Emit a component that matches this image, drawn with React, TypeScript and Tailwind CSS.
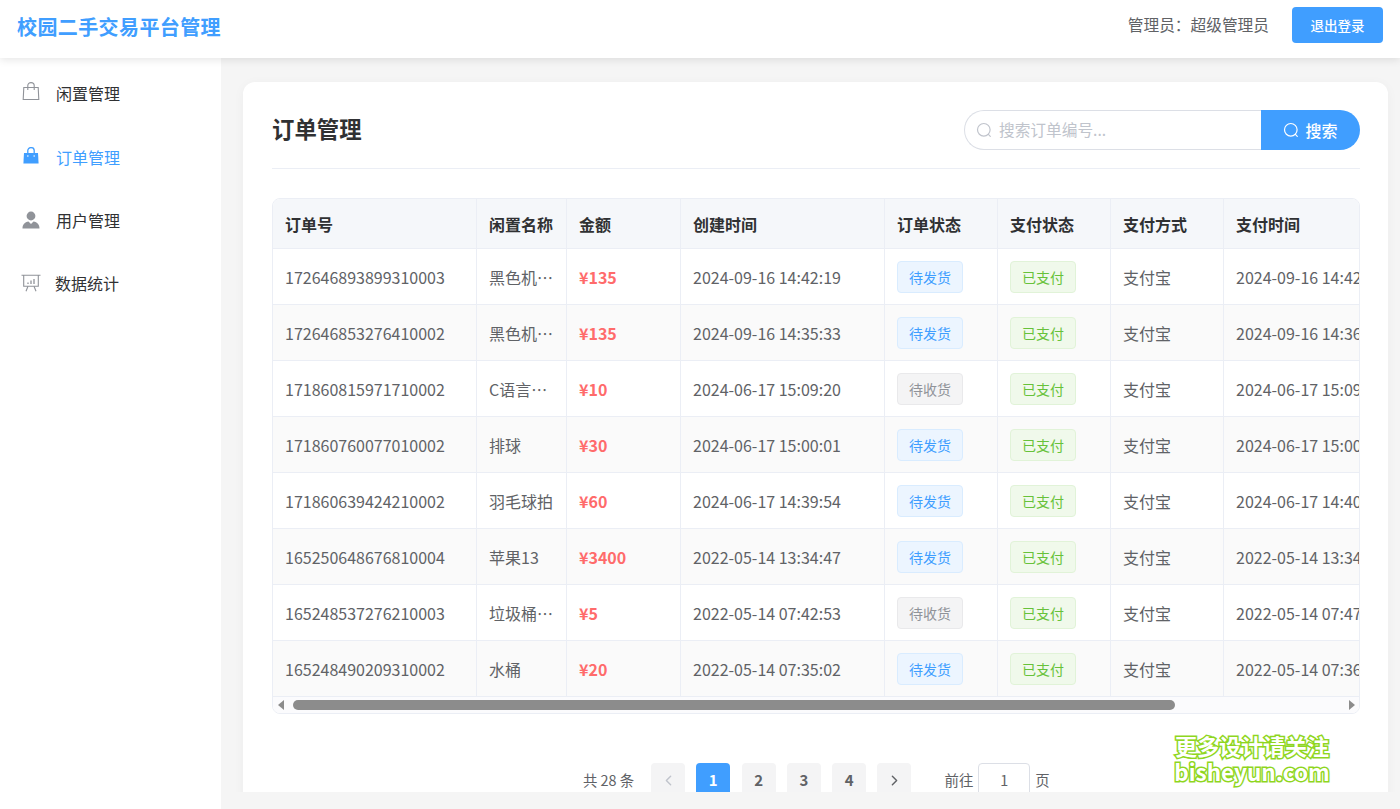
import { ChevronLeft, ChevronRight } from "lucide-react";

const font = "font-['Noto_Sans_CJK_SC','Noto_Sans',sans-serif]";

const GoodsIcon = () => (
  <svg width="18" height="18" viewBox="0 0 18 18" fill="none" stroke="#909399" strokeWidth="1.1">
    <path d="M1.800 5.500h14.400l.6 12H1.200z" />
    <path d="M5.800 8V3.600a3.200 3 0 0 1 6.400 0V8" />
  </svg>
);

const GoodsFilledIcon = () => (
  <svg width="18" height="18" viewBox="0 0 18 18" fill="none">
    <path d="M5.800 7V3.600a3.200 3 0 0 1 6.400 0V7" stroke="#409eff" strokeWidth="1.300" />
    <path d="M2 6h14l.6 10.600H1.400z" fill="#409eff" />
    <path d="M5.300 8.300h1.100v1.500H5.300zM11.600 8.300h1.100v1.500h-1.100z" fill="#fff" />
  </svg>
);

const UserIcon = () => (
  <svg width="18" height="18" viewBox="0 0 18 18" fill="#909399">
    <circle cx="9" cy="5" r="4.400" />
    <path d="M.5 17.500c0-4 2.200-6.500 6-7L9 13l2.500-2.500c3.800.5 6 3 6 7z" />
  </svg>
);

const BoardIcon = () => (
  <svg width="20" height="18" viewBox="0 0 20 18" fill="none" stroke="#909399" strokeWidth="1.100">
    <path d="M.5 1.200h19M2.700 1.200v11h14.600v-11" />
    <path d="M7 12.200l-2 5M13 12.200l2 5" />
    <path d="M7 10V8.500M10 10V6.500M13 10V5" strokeWidth="1.300" />
  </svg>
);

const SearchIcon = ({ color }: { color: string }) => (
  <svg width="16" height="16" viewBox="0 0 16 16" fill="none" stroke={color} strokeWidth="1.200" strokeLinecap="round">
    <circle cx="7.800" cy="7.800" r="6.300" />
    <path d="M12.400 12.400l1.900 1.900" />
  </svg>
);

const menus = [
  { name: "闲置管理", icon: <GoodsIcon />, offset: "mb-[5px]" },
  { name: "订单管理", icon: <GoodsFilledIcon />, offset: "mb-[1px]" },
  { name: "用户管理", icon: <UserIcon />, offset: "mb-[1px]" },
  { name: "数据统计", icon: <BoardIcon />, offset: "-ml-[1px]" },
];

const orders = [
  { no: "172646893899310003", name: "黑色机…", price: "¥135", created: "2024-09-16 14:42:19", status: "待发货", paid: "2024-09-16 14:42:25" },
  { no: "172646853276410002", name: "黑色机…", price: "¥135", created: "2024-09-16 14:35:33", status: "待发货", paid: "2024-09-16 14:36:02" },
  { no: "171860815971710002", name: "C语言…", price: "¥10", created: "2024-06-17 15:09:20", status: "待收货", paid: "2024-06-17 15:09:41" },
  { no: "171860760077010002", name: "排球", price: "¥30", created: "2024-06-17 15:00:01", status: "待发货", paid: "2024-06-17 15:00:30" },
  { no: "171860639424210002", name: "羽毛球拍", price: "¥60", created: "2024-06-17 14:39:54", status: "待发货", paid: "2024-06-17 14:40:12" },
  { no: "165250648676810004", name: "苹果13", price: "¥3400", created: "2022-05-14 13:34:47", status: "待发货", paid: "2022-05-14 13:34:58" },
  { no: "165248537276210003", name: "垃圾桶…", price: "¥5", created: "2022-05-14 07:42:53", status: "待收货", paid: "2022-05-14 07:47:10" },
  { no: "165248490209310002", name: "水桶", price: "¥20", created: "2022-05-14 07:35:02", status: "待发货", paid: "2022-05-14 07:36:20" },
];

const heads = ["订单号", "闲置名称", "金额", "创建时间", "订单状态", "支付状态", "支付方式", "支付时间"];
const widths = ["w-[204px]", "w-[90px]", "w-[114px]", "w-[204px]", "w-[113px]", "w-[113px]", "w-[113px]", "w-[204px]"];

const Tag = ({ text }: { text: string }) => {
  const color =
    text === "已支付"
      ? "bg-[#f0f9eb] border-[#e1f3d8] text-[#67c23a]"
      : text === "待发货"
        ? "bg-[#ecf5ff] border-[#d9ecff] text-[#409eff]"
        : "bg-[#f4f4f5] border-[#e9e9eb] text-[#909399]";
  return (
    <span className={`flex h-8 w-[66px] items-center justify-center rounded border text-sm ${color}`}>
      {text}
    </span>
  );
};

const cell = "h-14 border-r border-b border-[#ebeef5] px-3 whitespace-nowrap overflow-hidden";
const pageBtn = "flex h-[34px] w-[34px] items-center justify-center rounded-sm";

export default function App() {
  return (
    <div className={`relative flex h-[809px] w-[1400px] flex-col overflow-hidden bg-[#f5f5f5] ${font}`}>
      <header className="relative z-10 flex h-[58px] items-center justify-between bg-white px-[17px] pb-2 shadow-[0_2px_8px_rgba(0,0,0,0.1)]">
        <h1 className="mt-1 text-[20px] font-bold tracking-[0.4px] text-[#409eff]">校园二手交易平台管理</h1>
        <div className="flex items-center gap-[23px]">
          <span className="text-[15.700px] text-[#606266]">管理员：超级管理员</span>
          <button className="h-9 w-[91px] rounded bg-[#409eff] text-[13.500px] font-medium text-white">退出登录</button>
        </div>
      </header>

      <div className="flex min-h-0 flex-1">
        <aside className="w-[221px] bg-white pt-[3.700px]">
          {menus.map((m) => {
            const active = m.name === "订单管理";
            return (
              <div key={m.name} className="flex h-[63.330px] items-center pl-[22px]">
                <span className={`flex w-[34px] ${m.offset}`}>{m.icon}</span>
                <span className={`text-base ${active ? "text-[#409eff]" : "text-[#303133]"}`}>{m.name}</span>
              </div>
            );
          })}
        </aside>

        <main className="flex min-w-0 flex-1 flex-col">
          <div className="min-h-0 flex-1 overflow-hidden pl-[22px] pr-3 pt-6">
            <div className="rounded-xl bg-white pb-10 pl-[29px] pr-[28px] pt-7 shadow-[0_2px_12px_rgba(0,0,0,0.04)]">
              <div className="flex items-center justify-between border-b border-[#ebeef5] pb-[18px]">
                <h2 className="mb-[2px] text-[22.400px] font-bold text-[#303133]">订单管理</h2>
                <div className="flex h-10 w-[396px]">
                  <div className="flex flex-1 items-center gap-[7px] rounded-l-[20px] border border-r-0 border-[#dcdfe6] pl-[11px]">
                    <SearchIcon color="#c0c4cc" />
                    <span className="text-[15.700px] text-[#c0c4cc]">搜索订单编号...</span>
                  </div>
                  <button className="flex w-[99px] items-center justify-center gap-[6px] rounded-r-[20px] bg-[#409eff] text-base font-medium text-white">
                    <SearchIcon color="#ffffff" />
                    搜索
                  </button>
                </div>
              </div>

              <div className="mt-[29px] overflow-hidden rounded-lg border border-[#ebeef5]">
                <table className="w-[1155px] table-fixed border-separate border-spacing-0 text-left text-base">
                  <colgroup>
                    {widths.map((w, i) => (
                      <col key={i} className={w} />
                    ))}
                  </colgroup>
                  <thead>
                    <tr>
                      {heads.map((h) => (
                        <th key={h} className="h-[50px] border-r border-b border-[#ebeef5] bg-[#f5f7fa] px-3 font-bold text-[#303133]">
                          {h}
                        </th>
                      ))}
                    </tr>
                  </thead>
                  <tbody>
                    {orders.map((o, i) => (
                      <tr key={o.no} className={i % 2 ? "bg-[#fafafa]" : "bg-white"}>
                        <td className={`${cell} text-[#606266]`}>{o.no}</td>
                        <td className={`${cell} text-[#606266]`}>{o.name}</td>
                        <td className={`${cell} font-bold text-[#ff6b6b]`}>{o.price}</td>
                        <td className={`${cell} text-[#606266]`}>{o.created}</td>
                        <td className={cell}><Tag text={o.status} /></td>
                        <td className={cell}><Tag text="已支付" /></td>
                        <td className={`${cell} text-[#606266]`}>支付宝</td>
                        <td className={`${cell} text-[#606266]`}>{o.paid}</td>
                      </tr>
                    ))}
                  </tbody>
                </table>
                <div className="flex h-[16px] items-center bg-[#fbfbfd] pl-[5px] pr-[4px]">
                  <span className="h-0 w-0 border-y-[5px] border-r-[6px] border-y-transparent border-r-[#8c8c8c]" />
                  <span className="ml-[9px] h-[10px] w-[882px] rounded-full bg-[#8c8c8c]" />
                  <span className="ml-auto h-0 w-0 border-y-[5px] border-l-[6px] border-y-transparent border-l-[#8c8c8c]" />
                </div>
              </div>

              <div className="mt-[49px] flex items-center pl-[311px] text-[14.400px] text-[#606266]">
                <span className="w-[68px]">共 28 条</span>
                <div className="flex gap-[11.300px] text-[15px] font-bold">
                  <span className={`${pageBtn} bg-[#f4f4f5] text-[#c0c4cc]`}>
                    <ChevronLeft size={17} />
                  </span>
                  <span className={`${pageBtn} bg-[#409eff] text-white`}>1</span>
                  {["2", "3", "4"].map((n) => (
                    <span key={n} className={`${pageBtn} bg-[#f4f4f5]`}>{n}</span>
                  ))}
                  <span className={`${pageBtn} bg-[#f4f4f5]`}>
                    <ChevronRight size={17} />
                  </span>
                </div>
                <span className="ml-[33px]">前往</span>
                <span className="mx-[5px] flex h-[34px] w-[52px] items-center justify-center rounded border border-[#dcdfe6]">1</span>
                <span>页</span>
              </div>
            </div>
          </div>
          <div className="h-[17px] shrink-0" />
        </main>
      </div>

      <div className="absolute left-[1173px] top-[732px] z-20 w-[158px] text-center font-bold leading-[26px] text-white [-webkit-text-stroke:3px_#8fd61f] [paint-order:stroke_fill]">
        <div className="text-[22px]">更多设计请关注</div>
        <div className="text-[22.500px]">bisheyun.com</div>
      </div>
    </div>
  );
}
